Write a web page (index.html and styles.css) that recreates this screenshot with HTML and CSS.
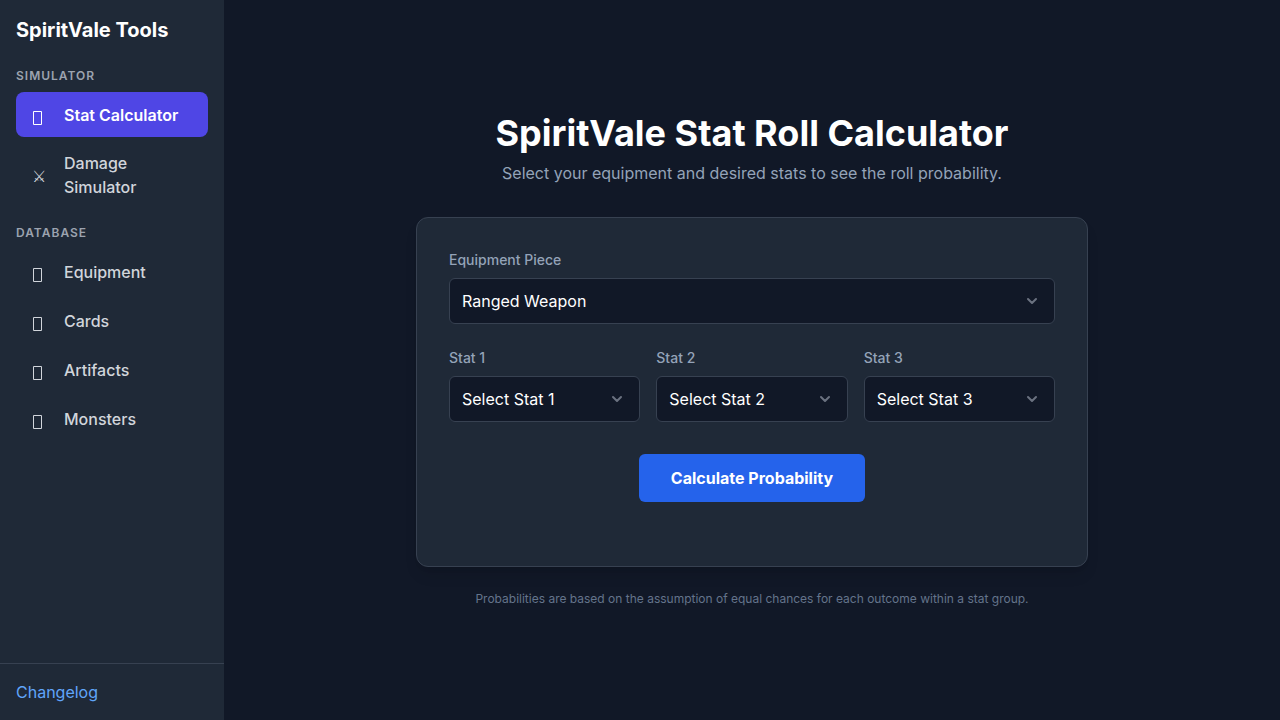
FILE: index.html
```html
<!DOCTYPE html>
<html lang="en">
<head>
<meta charset="utf-8">
<title>SpiritVale Stat Roll Calculator</title>
<link rel="stylesheet" href="styles.css">
</head>
<body>
<svg class="sprite" aria-hidden="true">
  <symbol id="box" viewBox="0 0 16 24"><path d="M1.5 8.5h8v13h-8z" fill="none" stroke="currentColor"/></symbol>
</svg>
<div class="app">
  <aside class="sidebar">
    <nav class="nav">
      <div class="brand">SpiritVale Tools</div>
      <h3 class="nav-heading">Simulator</h3>
      <ul class="nav-list">
        <li><a class="nav-link active" href="#"><svg class="nav-icon" aria-hidden="true"><use href="#box"/></svg><span>Stat Calculator</span></a></li>
        <li><a class="nav-link" href="#"><span class="nav-icon nav-glyph">&#x2694;&#xFE0E;</span><span>Damage Simulator</span></a></li>
      </ul>
      <h3 class="nav-heading">Database</h3>
      <ul class="nav-list">
        <li><a class="nav-link" href="#"><svg class="nav-icon" aria-hidden="true"><use href="#box"/></svg><span>Equipment</span></a></li>
        <li><a class="nav-link" href="#"><svg class="nav-icon" aria-hidden="true"><use href="#box"/></svg><span>Cards</span></a></li>
        <li><a class="nav-link" href="#"><svg class="nav-icon" aria-hidden="true"><use href="#box"/></svg><span>Artifacts</span></a></li>
        <li><a class="nav-link" href="#"><svg class="nav-icon" aria-hidden="true"><use href="#box"/></svg><span>Monsters</span></a></li>
      </ul>
    </nav>
    <div class="sidebar-footer"><a class="changelog" href="#">Changelog</a></div>
  </aside>
  <main class="main">
    <div class="content">
      <header class="header">
        <h1 class="title">SpiritVale Stat Roll Calculator</h1>
        <p class="subtitle">Select your equipment and desired stats to see the roll probability.</p>
      </header>
      <form class="card">
        <div class="field">
          <label class="label" for="piece">Equipment Piece</label>
          <select class="select" id="piece"><option>Ranged Weapon</option></select>
        </div>
        <div class="stats">
          <div class="field"><label class="label" for="s1">Stat 1</label><select class="select" id="s1"><option>Select Stat 1</option></select></div>
          <div class="field"><label class="label" for="s2">Stat 2</label><select class="select" id="s2"><option>Select Stat 2</option></select></div>
          <div class="field"><label class="label" for="s3">Stat 3</label><select class="select" id="s3"><option>Select Stat 3</option></select></div>
        </div>
        <div class="actions"><button class="button" type="button">Calculate Probability</button></div>
      </form>
      <footer class="note">Probabilities are based on the assumption of equal chances for each outcome within a stat group.</footer>
    </div>
  </main>
</div>
</body>
</html>
```
FILE: styles.css
```css
*, *::before, *::after { box-sizing: border-box; }
body, h1, h3, p, ul { margin: 0; padding: 0; }
ul { list-style: none; }
a { color: inherit; text-decoration: none; }
body {
  background: #111827;
  color: #d1d5db;
  font-family: Inter, sans-serif;
  font-size: 16px;
  line-height: 24px;
}
.sprite { display: none; }
.app { display: flex; min-height: 100vh; }
.sidebar {
  display: flex;
  flex-direction: column;
  flex: none;
  width: 224px;
  background: #1f2937;
}
.nav { flex: 1; padding: 16px; }
.brand { margin-bottom: 24px; color: #fff; font-size: 20px; font-weight: 700; line-height: 28px; }
.nav-heading {
  margin-bottom: 8px;
  color: #9ca3af;
  font-size: 12px;
  font-weight: 600;
  line-height: 16px;
  letter-spacing: 1px;
  text-transform: uppercase;
}
.nav-list { display: flex; flex-direction: column; gap: 4px; margin-bottom: 16px; }
.nav-link {
  display: flex;
  align-items: center;
  min-height: 45px;
  padding: 10px 16px;
  border-radius: 8px;
  font-weight: 500;
}
.nav-link.active { background: #4f46e5; color: #fff; font-weight: 600; }
.nav-icon { flex: none; width: 16px; height: 24px; margin-right: 16px; }
.nav-glyph { font-family: "DejaVu Sans", sans-serif; font-weight: 400; line-height: 28px; }
.sidebar-footer { padding: 16px; border-top: 1px solid #374151; }
.changelog { color: #60a5fa; }
.main { display: flex; flex: 1; align-items: center; justify-content: center; padding: 16px; }
.content { width: 100%; max-width: 672px; }
.header { margin-bottom: 32px; text-align: center; }
.title { color: #fff; font-size: 36px; font-weight: 700; line-height: 40px; }
.subtitle { margin-top: 8px; color: #94a3b8; }
.card {
  padding: 32px 32px 64px;
  background: #1f2937;
  border: 1px solid #374151;
  border-radius: 12px;
  box-shadow: 0 10px 15px -3px rgba(0, 0, 0, 0.1), 0 4px 6px -4px rgba(0, 0, 0, 0.1);
}
.label { display: block; margin-bottom: 8px; color: #94a3b8; font-size: 14px; font-weight: 500; line-height: 20px; }
.select {
  display: block;
  width: 100%;
  padding: 10px 40px 10px 12px;
  appearance: none;
  border: 1px solid #374151;
  border-radius: 6px;
  background: #111827 url("data:image/svg+xml,%3Csvg xmlns='http://www.w3.org/2000/svg' fill='none' viewBox='0 0 20 20'%3E%3Cpath stroke='%236b7280' stroke-linecap='round' stroke-linejoin='round' stroke-width='2' d='M6 8l4 4 4-4'/%3E%3C/svg%3E") no-repeat right 12px center / 20px 20px;
  color: #fff;
  font: inherit;
}
.stats { display: grid; grid-template-columns: repeat(3, 1fr); gap: 16px; margin-top: 24px; }
.actions { margin-top: 32px; text-align: center; }
.button {
  display: inline-block;
  padding: 12px 32px;
  border: 0;
  border-radius: 6px;
  background: #2563eb;
  color: #fff;
  font: inherit;
  font-weight: 700;
  vertical-align: top;
}
.note { margin-top: 24px; color: #64748b; font-size: 12px; line-height: 16px; text-align: center; }
```
